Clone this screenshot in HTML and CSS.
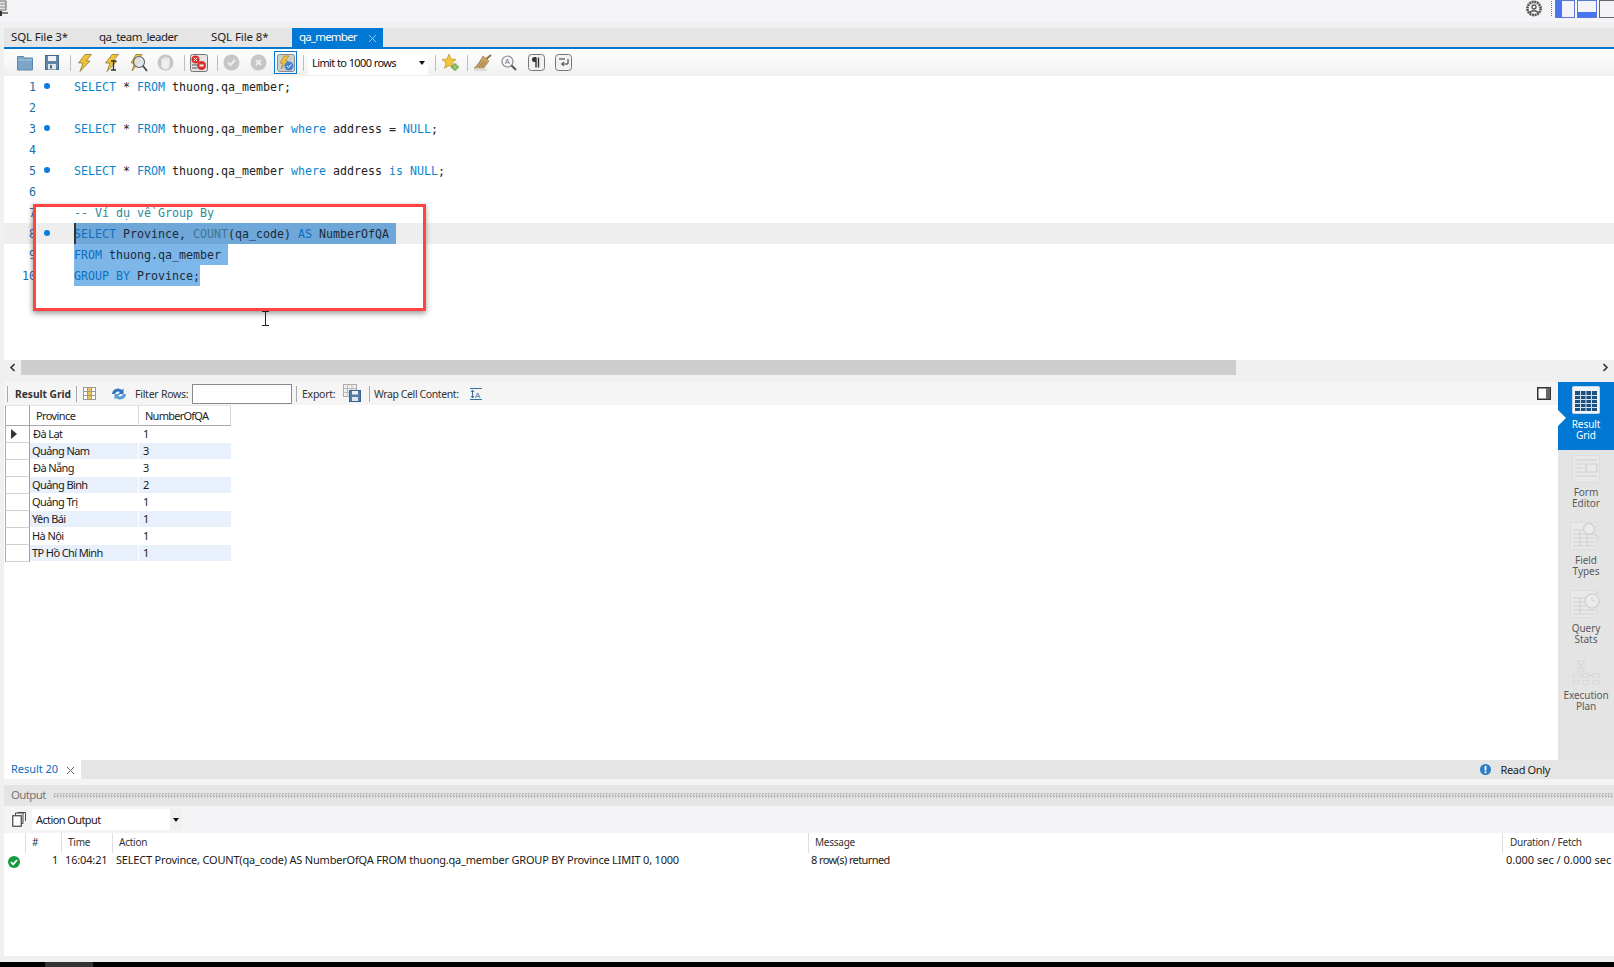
FILE: index.html
```html
<!DOCTYPE html>
<html lang="vi">
<head>
<meta charset="utf-8">
<title>MySQL Workbench</title>
<link rel="stylesheet" href="styles.css">
</head>
<body>
<div class="app">
  <header class="topbar">
    <svg class="logo" width="12" height="18" viewBox="0 0 12 18"><path d="M0 1h8v9H0z" fill="#e8e8e8" stroke="#666"/><path d="M0 4h8M0 7h8" stroke="#888"/><path d="M0 13h10" stroke="#333" stroke-width="1.2"/><path d="M3 11v5" stroke="#333" stroke-width="2"/></svg>
    <div class="topright">
      <svg width="18" height="18" viewBox="0 0 18 18"><circle cx="9" cy="8.5" r="6.6" fill="none" stroke="#555" stroke-width="2.6" stroke-dasharray="2 .6"/><circle cx="9" cy="7" r="2" fill="none" stroke="#555" stroke-width="1.3"/><path d="M5 13c1-3 7-3 8 0" fill="none" stroke="#555" stroke-width="1.3"/></svg>
      <span class="dotline"></span>
      <svg width="20" height="18" viewBox="0 0 20 18"><rect x=".5" y=".5" width="19" height="17" fill="#f4f4f8" stroke="#5b78dc"/><rect x="1" y="1" width="6" height="16" fill="#4a74ee"/></svg>
      <svg width="20" height="18" viewBox="0 0 20 18"><rect x=".5" y=".5" width="19" height="17" fill="#f4f4f8" stroke="#5b78dc"/><rect x="1" y="12" width="18" height="5" fill="#4a74ee"/></svg>
      <svg width="15" height="18" viewBox="0 0 15 18"><rect x=".5" y=".5" width="19" height="17" fill="#f4f4f8" stroke="#666"/></svg>
    </div>
  </header>
  <div class="workspace">
    <div class="band-a"></div>
    <nav class="tabs">
      <span class="tab t1">SQL File 3*</span>
      <span class="tab t2">qa_team_leader</span>
      <span class="tab t3">SQL File 8*</span>
      <span class="tab active">qa_member<svg class="tabx" width="9" height="9" viewBox="0 0 9 9"><path d="M1 1l7 7M8 1L1 8" stroke="#9cc8ee" stroke-width="1"/></svg></span>
    </nav>
    <div class="toolbar">
      <svg class="ic i-folder" width="16" height="16" viewBox="0 0 16 16"><path d="M.5 3V1.5h6l1 1.5h8v12H.5z" fill="#7ba6c8" stroke="#5d87a8"/><path d="M1 5h14" stroke="#a9c8de"/></svg>
      <svg class="ic i-save" width="14" height="15" viewBox="0 0 14 15"><rect x=".5" y=".5" width="13" height="14" fill="#5f86a8" stroke="#48688a"/><rect x="3" y="1" width="8" height="5" fill="#eef2f6"/><rect x="3" y="9" width="8" height="5.5" fill="#dfe6ec"/><rect x="5" y="10" width="2" height="3.5" fill="#48688a"/></svg>
      <i class="sep s1"></i>
      <svg class="ic i-b1" width="15" height="18" viewBox="0 0 15 18"><path d="M8 .5h6.5L9 7h4L3 17.5 6 9H1.5z" fill="#f3c431" stroke="#8c7a3c" stroke-width=".8"/></svg>
      <svg class="ic i-b2" width="15" height="18" viewBox="0 0 15 18"><path d="M8 .5h6.5L9 7h4L3 17.5 6 9H1.5z" fill="#f3c431" stroke="#8c7a3c" stroke-width=".8"/><path d="M7 7h5M7 16h5M9.5 7v9" stroke="#333" stroke-width="1.3"/></svg>
      <svg class="ic i-b3" width="19" height="18" viewBox="0 0 19 18"><path d="M7 .5h6L9 6h3L3 17 5.5 9H2z" fill="#f3c431" stroke="#8c7a3c" stroke-width=".8"/><circle cx="10" cy="8" r="5.5" fill="#dde6ee" fill-opacity=".85" stroke="#667" stroke-width="1.2"/><path d="M14 12l4 5" stroke="#444" stroke-width="1.8"/></svg>
      <svg class="ic i-hand" width="17" height="17" viewBox="0 0 17 17"><circle cx="8.5" cy="8.5" r="8" fill="#c6c6c6"/><path d="M5 7v4c0 2 1.5 3.500 3.500 3.500S12 13 12 11V6H5zM5.500 4.500v4M7.500 3v5M9.500 3v5M11.500 4v4" fill="#eee" stroke="#eee" stroke-width="1.300"/></svg>
      <i class="sep s2"></i>
      <svg class="ic i-stop" width="18" height="18" viewBox="0 0 18 18"><rect x=".5" y=".5" width="17" height="17" rx="2" fill="#e4e4e4" stroke="#777"/><circle cx="5.5" cy="5.5" r="4" fill="#d9302c"/><path d="M3.800 3.800l3.400 3.400m0-3.400L3.800 7.200" stroke="#fff"/><circle cx="11.500" cy="11.500" r="4.500" fill="#d9302c"/><rect x="9.500" y="10.500" width="4" height="2" fill="#fff"/><path d="M2 11h5M2 14h5" stroke="#555"/></svg>
      <i class="sep s3"></i>
      <svg class="ic i-ok" width="17" height="17" viewBox="0 0 17 17"><circle cx="8.5" cy="8.5" r="8" fill="#c6c6c6"/><path d="M5 8.500l2.500 2.500L12 6" stroke="#eee" stroke-width="2" fill="none"/></svg>
      <svg class="ic i-no" width="17" height="17" viewBox="0 0 17 17"><circle cx="8.5" cy="8.5" r="8" fill="#c6c6c6"/><path d="M6 6l5 5M11 6l-5 5" stroke="#eee" stroke-width="2"/></svg>
      <span class="toggle"><svg width="18" height="18" viewBox="0 0 18 18"><rect x=".5" y=".5" width="17" height="17" rx="2" fill="#cfcfcf" stroke="#888"/><path d="M7 2h5L8 7h3l-7 8 2-6H3z" fill="#f3c431" stroke="#8c7a3c" stroke-width=".6"/><circle cx="12" cy="12" r="4.500" fill="#4a84d6"/><path d="M10 12l1.500 1.500L14.200 10.500" stroke="#fff" fill="none"/></svg></span>
      <i class="sep s4"></i>
      <div class="limit"><span>Limit to 1000 rows</span><b class="caret"></b></div>
      <i class="sep s5"></i>
      <svg class="ic i-star" width="17" height="17" viewBox="0 0 17 17"><path d="M7 0l2 5 5 .5-4 3.500 1.300 5.300L7 11.500l-4.500 2.800L4 9 0 5.500 5 5z" fill="#f2c63a" stroke="#b8922a" stroke-width=".7"/><path d="M13 9.500v7M9.500 13h7" stroke="#5c9a3a" stroke-width="3"/><path d="M13 10.500v5M10.500 13h5" stroke="#bde08c" stroke-width="1"/></svg>
      <i class="sep s6"></i>
      <svg class="ic i-broom" width="19" height="17" viewBox="0 0 19 17"><path d="M18 1l-6 5" stroke="#8a6a3a" stroke-width="1.800"/><path d="M10 2l6 5-5 7H1C5 12 7 7 10 2z" fill="#c9a468" stroke="#987a48" stroke-width=".6"/><path d="M6 13l5-6M3 13l5-7M9 13l4-5" stroke="#8a6a3a" stroke-width=".7"/><path d="M1 16h13" stroke="#d4d4d4" stroke-width="1.500"/></svg>
      <svg class="ic i-find" width="16" height="16" viewBox="0 0 16 16"><circle cx="6.500" cy="6.500" r="5.500" fill="#f4f6f8" stroke="#889" stroke-width="1.200"/><path d="M10.500 10.500L15 15" stroke="#555" stroke-width="2"/><text x="4" y="9" class="tiny">A</text></svg>
      <svg class="ic i-para" width="17" height="17" viewBox="0 0 17 17"><rect x=".5" y=".5" width="16" height="16" rx="3" fill="#f2f2f2" stroke="#777"/><path d="M8 3.500v10M10.500 3.500v10" stroke="#333" stroke-width="1.400"/><path d="M8 3H6.500a2.500 2.500 0 0 0 0 5H8z" fill="#333"/></svg>
      <svg class="ic i-wrap" width="17" height="17" viewBox="0 0 17 17"><rect x=".5" y=".5" width="16" height="16" rx="3" fill="#f2f2f2" stroke="#777"/><path d="M4 5h6M13 5v5H7M9 8L6.500 10 9 12" stroke="#333" fill="none"/></svg>
    </div>

    <section class="editor">
      <div class="line"><span class="ln">1</span><span class="dot"></span><code><b class="kw">SELECT</b> * <b class="kw">FROM</b> thuong.qa_member;</code></div>
      <div class="line"><span class="ln">2</span><span class="nodot"></span><code></code></div>
      <div class="line"><span class="ln">3</span><span class="dot"></span><code><b class="kw">SELECT</b> * <b class="kw">FROM</b> thuong.qa_member <b class="kw">where</b> address = <b class="kw">NULL</b>;</code></div>
      <div class="line"><span class="ln">4</span><span class="nodot"></span><code></code></div>
      <div class="line"><span class="ln">5</span><span class="dot"></span><code><b class="kw">SELECT</b> * <b class="kw">FROM</b> thuong.qa_member <b class="kw">where</b> address <b class="kw">is</b> <b class="kw">NULL</b>;</code></div>
      <div class="line"><span class="ln">6</span><span class="nodot"></span><code></code></div>
      <div class="line"><span class="ln">7</span><span class="nodot"></span><code class="comment">-- Ví dụ về Group By</code></div>
      <div class="line current"><span class="ln">8</span><span class="dot"></span><code class="sel sel-cur"><i class="cursor"></i><b class="kw">SELECT</b> Province, <b class="fn">COUNT</b>(qa_code) <b class="kw">AS</b> NumberOfQA</code></div>
      <div class="line"><span class="ln">9</span><span class="nodot"></span><code class="sel sel-nl"><b class="kw">FROM</b> thuong.qa_member</code></div>
      <div class="line"><span class="ln">10</span><span class="nodot"></span><code class="sel"><b class="kw">GROUP BY</b> Province;</code></div>
      <div class="callout"></div>
      <svg class="ibeam" width="9" height="15" viewBox="0 0 9 15"><path d="M1 .5h7M1 14.500h7M4.500 0v15" stroke="#222"/></svg>
    </section>

    <div class="hscroll">
      <span class="sbtn"><svg width="7" height="9" viewBox="0 0 7 9"><path d="M5.500 1L2 4.500 5.500 8" fill="none" stroke="#333" stroke-width="1.600"/></svg></span>
      <div class="track"><div class="thumb"></div></div>
      <span class="sbtn"><svg width="7" height="9" viewBox="0 0 7 9"><path d="M1.500 1L5 4.500 1.500 8" fill="none" stroke="#333" stroke-width="1.600"/></svg></span>
    </div>
    <div class="band-b"></div>

    <div class="resultarea">
      <div class="resultmain">
        <div class="rtoolbar">
          <i class="vsep rs0"></i>
          <strong class="rg">Result Grid</strong>
          <i class="vsep rs1"></i>
          <svg class="ric r-grid" width="13" height="13" viewBox="0 0 13 13"><rect x=".5" y=".5" width="12" height="12" fill="#fff" stroke="#999"/><rect x="4.500" y="1" width="4" height="11" fill="#f2c14e"/><path d="M4.500 0v13M8.500 0v13M0 4.500h13M0 8.500h13" stroke="#999"/></svg>
          <svg class="ric r-ref" width="16" height="14" viewBox="0 0 16 14"><path d="M1 7a6 6 0 0 1 10-4l1.500-1.500V7H7l2-2a3.500 3.500 0 0 0-5 2z" fill="#2f77bd"/><path d="M15 7a6 6 0 0 1-10 4l-1.500 1.500V7H9l-2 2a3.500 3.500 0 0 0 5-2z" fill="#5a9bd8"/></svg>
          <span class="rlabel r-filter">Filter Rows:</span>
          <span class="rinput"></span>
          <i class="vsep rs2"></i>
          <span class="rlabel r-export">Export:</span>
          <svg class="ric r-exp" width="18" height="18" viewBox="0 0 18 18"><rect x=".5" y=".5" width="13" height="12" fill="#f0f0f0" stroke="#aaa"/><path d="M0 4.500h13M0 8.500h13M4.500 0v13M9 0v13" stroke="#bbb"/><rect x="6.500" y="6.500" width="11" height="11" fill="#4f7fa8" stroke="#3a6286"/><rect x="9" y="7" width="6" height="3.500" fill="#eef2f6"/><rect x="9" y="13" width="6" height="4" fill="#dfe6ec"/></svg>
          <i class="vsep rs3"></i>
          <span class="rlabel r-wrap">Wrap Cell Content:</span>
          <svg class="ric r-wr" width="12" height="12" viewBox="0 0 12 12"><path d="M0 .5h12M0 11.500h12" stroke="#3a6f9e"/><path d="M2.500 2v8M1 4l1.500-2L4 4M1 8l1.500 2L4 8" stroke="#3a6f9e" fill="none"/><text x="5" y="9.500" class="tinyb">A</text></svg>
          <svg class="r-toggle" width="14" height="13" viewBox="0 0 14 13"><rect x=".75" y=".75" width="12.500" height="11.500" fill="#fff" stroke="#333" stroke-width="1.500"/><rect x="9" y="1" width="4" height="11" fill="#666"/></svg>
        </div>
        <table class="grid">
          <thead><tr><th class="rh"></th><th class="c1">Province</th><th class="c2">NumberOfQA</th></tr></thead>
          <tbody>
            <tr><td class="rh"><b class="rowarrow"></b></td><td class="d1 shift">Đà Lạt</td><td class="d2">1</td></tr>
            <tr class="alt"><td class="rh"></td><td class="d1">Quảng Nam</td><td class="d2">3</td></tr>
            <tr><td class="rh"></td><td class="d1 shift">Đà Nẵng</td><td class="d2">3</td></tr>
            <tr class="alt"><td class="rh"></td><td class="d1">Quảng Bình</td><td class="d2">2</td></tr>
            <tr><td class="rh"></td><td class="d1">Quảng Trị</td><td class="d2">1</td></tr>
            <tr class="alt"><td class="rh"></td><td class="d1">Yên Bái</td><td class="d2">1</td></tr>
            <tr><td class="rh"></td><td class="d1">Hà Nội</td><td class="d2">1</td></tr>
            <tr class="alt"><td class="rh"></td><td class="d1">TP Hồ Chí Minh</td><td class="d2">1</td></tr>
          </tbody>
        </table>
      </div>
      <aside class="side">
        <div class="sitem on">
          <svg width="28" height="28" viewBox="0 0 28 28"><rect x=".5" y=".5" width="27" height="27" rx="1" fill="#f2f6fa" stroke="#c8d8e8"/><rect x="3" y="5" width="22" height="20" fill="#1f4f7c"/><path d="M3 9.500h22M3 13.500h22M3 17.500h22M3 21.500h22M8.500 5v20M14 5v20M19.500 5v20" stroke="#cfe0ef"/></svg>
          <span>Result<br>Grid</span>
        </div>
        <div class="sitem form">
          <svg width="28" height="28" viewBox="0 0 28 28"><rect x=".5" y=".5" width="27" height="27" rx="1" fill="#e9e9e9" stroke="#dcdcdc"/><path d="M3 5h22M3 9h8M3 13h8M3 17h8M3 21h22M10 17h15M14 9h11v8H14z" fill="none" stroke="#cfcfcf" stroke-width="1.200"/></svg>
          <span>Form<br>Editor</span>
        </div>
        <div class="sitem types">
          <svg width="32" height="28" viewBox="0 0 32 28"><rect x=".5" y=".5" width="26" height="27" rx="1" fill="#e9e9e9" stroke="#dcdcdc"/><path d="M3 8h22M3 12h22M3 16h22M3 20h22M3 24h22M10 8v16M17 8v16" stroke="#cfcfcf" stroke-width="1.100"/><circle cx="19" cy="7" r="5.500" fill="#ececec" stroke="#d2d2d2" stroke-width="1.500"/><path d="M23 11l7 6" stroke="#d8d8d8" stroke-width="2"/></svg>
          <span>Field<br>Types</span>
        </div>
        <div class="sitem stats">
          <svg width="32" height="28" viewBox="0 0 32 28"><rect x=".5" y=".5" width="26" height="27" rx="1" fill="#e9e9e9" stroke="#dcdcdc"/><path d="M3 8h22M3 12h22M3 16h22M3 20h22M3 24h22M10 8v16" stroke="#cfcfcf" stroke-width="1.100"/><circle cx="22" cy="11" r="7" fill="#ececec" stroke="#d2d2d2" stroke-width="1.500"/><path d="M22 7v4h3" stroke="#d0d0d0" fill="none"/><circle cx="27" cy="2.500" r="1.800" fill="#d8d8d8"/></svg>
          <span>Query<br>Stats</span>
        </div>
        <div class="sitem plan">
          <svg width="28" height="25" viewBox="0 0 28 25"><g fill="#e9e9e9" stroke="#d4d4d4"><rect x="6" y="1" width="6" height="3"/><rect x="6" y="8" width="6" height="3"/><rect x="1" y="14" width="6" height="3"/><rect x="11" y="14" width="6" height="3"/><rect x="21" y="14" width="6" height="3"/><rect x="1" y="21" width="6" height="3"/><rect x="11" y="21" width="6" height="3"/><rect x="21" y="21" width="6" height="3"/></g><path d="M9 4v4M9 11v3M7 15.500h4M17 15.500h4" stroke="#d4d4d4"/></svg>
          <span>Execution<br>Plan</span>
        </div>
      </aside>
    </div>

    <div class="rtabs">
      <span class="rtab">Result 20<svg width="9" height="9" viewBox="0 0 9 9"><path d="M1 1l7 7M8 1L1 8" stroke="#666"/></svg></span>
      <span class="readonly"><svg width="11" height="11" viewBox="0 0 11 11"><circle cx="5.500" cy="5.500" r="5.500" fill="#2d7cc4"/><rect x="4.600" y="2" width="1.800" height="4.500" fill="#fff"/><rect x="4.600" y="7.300" width="1.800" height="1.800" fill="#fff"/></svg>Read Only</span>
    </div>
    <div class="band-c"></div>
    <div class="outhead"><span>Output</span><i class="grip"></i></div>
    <div class="outbar">
      <svg width="14" height="15" viewBox="0 0 14 15"><rect x=".75" y="3.750" width="8.500" height="10.500" fill="#fff" stroke="#444" stroke-width="1.200"/><path d="M3.500 3V1h7.500v10.500h-1.500M6 1V.5h7.500V9" fill="none" stroke="#444"/></svg>
      <div class="outsel"><span>Action Output</span><em><b class="caret"></b></em></div>
    </div>
    <section class="log">
      <div class="loghead">
        <span class="h0"></span><span class="h1">#</span><span class="h2">Time</span><span class="h3">Action</span><span class="h4">Message</span><span class="h5">Duration / Fetch</span>
      </div>
      <div class="logrow">
        <span class="l0"><svg width="12" height="12" viewBox="0 0 12 12"><circle cx="6" cy="6" r="6" fill="#159a3c"/><path d="M3 6.200L5.200 8.400 9 4" stroke="#fff" stroke-width="1.800" fill="none"/></svg></span>
        <span class="l1">1</span><span class="l2">16:04:21</span>
        <span class="l3">SELECT Province, COUNT(qa_code) AS NumberOfQA FROM thuong.qa_member GROUP BY Province LIMIT 0, 1000</span>
        <span class="l4">8 row(s) returned</span>
        <span class="l5">0.000 sec / 0.000 sec</span>
      </div>
    </section>
    <div class="band-d"></div>
  </div>
  <footer class="taskbar"><span></span></footer>
</div>
</body>
</html>
```
FILE: styles.css
```css
* { box-sizing: border-box; }
html, body { margin: 0; padding: 0; background: #fff; }
body { font-family: "Noto Sans", "Open Sans", sans-serif; font-size: 11px; color: #1a1a1a; overflow: hidden; }
i, em { font-style: normal; }
svg { display: block; flex: none; }
.tiny { font: 7px "Liberation Sans", sans-serif; fill: #666; }
.tinyb { font: 8px "Liberation Sans", sans-serif; fill: #3a6f9e; }

.app { width: 1614px; height: 967px; display: flex; flex-direction: column; overflow: hidden; }

/* top */
.topbar { height: 22px; background: #f5f5f7; display: flex; justify-content: space-between; align-items: flex-start; }
.logo { margin-left: -2px; }
.topright { display: flex; align-items: flex-start; }
.topright svg:first-child { margin-right: 8px; }
.dotline { width: 1px; height: 15px; margin-top: 1px; margin-right: 3px; border-left: 1px dotted #5a7ba8; }
.topright svg + .dotline + svg, .topright svg + .dotline + svg + svg { margin-right: 2px; }

.workspace { flex: 1; padding-left: 4px; background: #f0f0f0; display: flex; flex-direction: column; min-height: 0; }
.band-a { height: 6px; background: #f0f0f2; }

/* tabs */
.tabs { height: 21px; background: #e5e5e5; border-bottom: 2px solid #0078d4; display: flex; font-size: 11.5px; }
.tab { line-height: 17px; color: #222; white-space: nowrap; }
.t1 { margin-left: 7px; width: 88px; letter-spacing: -.15px; }
.t2 { width: 112px; letter-spacing: -.5px; }
.t3 { width: 81px; letter-spacing: -.1px; }
.tab.active { width: 91px; padding: 0 6px 2px 7px; background: #0078d4; color: #fff; display: flex; align-items: center; justify-content: space-between; letter-spacing: -.8px; }
.tabx { margin-top: 3px; }

/* toolbar */
.toolbar { height: 27px; background: linear-gradient(#ffffff, #f0f0f0); display: flex; align-items: center; }
.sep { display: block; width: 1px; height: 16px; background: #bdbdbd; flex: none; }
.i-folder { margin-left: 13px; }
.i-save { margin-left: 12px; }
.s1 { margin-left: 11px; }
.i-b1 { margin-left: 6px; }
.i-b2 { margin-left: 12px; }
.i-b3 { margin-left: 10px; }
.i-hand { margin-left: 9px; }
.s2 { margin-left: 10px; }
.i-stop { margin-left: 5px; }
.s3 { margin-left: 9px; }
.i-ok { margin-left: 5px; }
.i-no { margin-left: 10px; }
.toggle { margin-left: 7px; width: 23px; height: 23px; border: 1px solid #0078d4; display: flex; align-items: center; justify-content: center; flex: none; }
.s4 { margin-left: 6px; }
.limit { margin-left: 4px; width: 120px; height: 24px; background: #fff; display: flex; align-items: center; padding-left: 4px; font-size: 11px; letter-spacing: -.6px; color: #111; position: relative; white-space: nowrap; flex: none; }
.limit .caret { position: absolute; right: 3px; top: 10px; }
.caret { display: block; width: 0; height: 0; border-left: 3.5px solid transparent; border-right: 3.5px solid transparent; border-top: 4px solid #111; }
.s5 { margin-left: 7px; }
.i-star { margin-left: 6px; }
.s6 { margin-left: 8px; }
.i-broom { margin-left: 5px; }
.i-find { margin-left: 9px; }
.i-para { margin-left: 11px; }
.i-wrap { margin-left: 10px; }

/* editor */
.editor { height: 284px; background: #fff; position: relative; flex: none; }
.line { height: 21px; display: flex; align-items: center; }
.line.current { background: #eeeeee; }
.ln { width: 32px; text-align: right; font: 11.63px/23px "DejaVu Sans Mono", monospace; height: 21px; color: #1c6fa8; flex: none; }
.dot, .nodot { width: 6px; height: 6px; margin: -1px 0 0 8px; border-radius: 50%; flex: none; }
.dot { background: #0a7be0; }
.line code { margin-left: 24px; font: 11.63px/23px "DejaVu Sans Mono", monospace; color: #222; white-space: pre; height: 21px; display: block; position: relative; }
.kw { font-weight: normal; color: #0a86d0; }
.fn { font-weight: normal; color: #5c8fa6; }
.comment { color: #2b8a9e !important; }
.line code.sel { background: #7db6e8; color: #1b2a3a; }
.line code.sel .kw { color: #0c6fc0; }
.line code.sel-cur { background: #6fa7d8; padding-right: 7px; }
.line code.sel-nl { padding-right: 7px; }
.line code.sel .fn { color: #3b7596; }
.cursor { position: absolute; left: 0; top: 0; width: 2px; height: 21px; background: #333; }
.callout { position: absolute; left: 29px; top: 128px; width: 393px; height: 107px; border: 3px solid #ff4444; box-shadow: 0 3px 6px rgba(0,0,0,.3), -1px 1px 4px rgba(0,0,0,.15); pointer-events: none; }
.ibeam { position: absolute; left: 257px; top: 235px; }

/* scrollbar */
.hscroll { height: 15px; background: #f0f0f0; display: flex; align-items: center; flex: none; }
.sbtn { width: 17px; display: flex; align-items: center; justify-content: center; flex: none; }
.track { flex: 1; height: 15px; }
.thumb { width: 1215px; height: 15px; background: #cdcdcd; }
.band-b { height: 7px; background: #f0f0f0; flex: none; }

/* result */
.resultarea { height: 378px; display: flex; flex: none; }
.resultmain { flex: 1; background: #fff; min-width: 0; }
.rtoolbar { height: 23px; background: #f5f5f5; display: flex; align-items: center; font-size: 10.5px; position: relative; }
.vsep { display: block; width: 1px; height: 16px; background: #aaa; flex: none; }
.rs0 { margin-left: 3px; }
.rg { margin-left: 7px; width: 56px; font-weight: 700; white-space: nowrap; font-size: 10.2px; color: #333; }
.rs1 { margin-left: 5px; }
.r-grid { margin-left: 6px; }
.r-ref { margin-left: 15px; }
.rlabel { color: #333; white-space: nowrap; flex: none; letter-spacing: -.25px; }
.r-filter { margin-left: 8px; width: 57px; }
.rinput { width: 100px; height: 20px; background: #fff; border: 1px solid #8a8a8a; flex: none; }
.rs2 { margin-left: 4px; }
.r-export { margin-left: 5px; width: 41px; }
.r-exp { margin-top: -1px; }
.rs3 { margin-left: 8px; }
.r-wrap { margin-left: 4px; width: 96px; letter-spacing: -.4px; }
.r-toggle { margin-left: auto; margin-right: 7px; }

.grid { border-collapse: separate; border-spacing: 0; table-layout: fixed; width: 226px; margin-left: 1px; font-size: 11px; letter-spacing: -.6px; }
.grid th { height: 21px; padding: 0; font-weight: 400; text-align: left; color: #222; background: #fff; border-top: 1px solid #e4e4e4; border-bottom: 1px solid #a8a8a8; border-right: 1px solid #d8d8d8; }
.grid th.rh { width: 25px; border-left: 1px solid #aaa; border-right: 1px solid #a0a0a0; }
.grid th.c1 { width: 109px; padding-left: 6px; }
.grid th.c2 { width: 92px; padding-left: 6px; letter-spacing: -.75px; }
.grid td { height: 17px; padding: 0; line-height: 16px; white-space: nowrap; border-bottom: 1px solid #fff; }
.grid td.rh { background: #fff; border-left: 1px solid #aaa; border-right: 1px solid #a0a0a0; border-bottom: 1px solid #d0d0d0; }
.d1 { padding-left: 2px !important; border-right: 1px solid #fff; }
.d1.shift { padding-left: 3px !important; }
.d2 { padding-left: 4px !important; }
.alt .d1, .alt .d2 { background: #e8f0fb; }
.rowarrow { display: block; margin-left: 5px; width: 0; height: 0; border-top: 5px solid transparent; border-bottom: 5px solid transparent; border-left: 6px solid #333; }

/* side */
.side { width: 56px; background: #e4e4e4; flex: none; display: flex; flex-direction: column; font-size: 10px; letter-spacing: -.05px; }
.sitem { display: flex; flex-direction: column; align-items: center; color: #5a5a5a; line-height: 11px; text-align: center; }
.sitem span { display: block; }
.sitem.on { height: 68px; background: #0078d4; color: #fff; position: relative; padding-top: 4px; }
.sitem.on span { margin-top: 5px; }
.sitem.on::before { content: ""; position: absolute; left: 0; top: 28px; border-left: 8px solid #fff; border-top: 8px solid transparent; border-bottom: 8px solid transparent; }
.sitem.form { height: 66px; padding-top: 5px; }
.sitem.form span { margin-top: 4px; }
.sitem.types { height: 68px; padding-top: 6px; }
.sitem.types span { margin-top: 5px; }
.sitem.stats { height: 68px; padding-top: 6px; }
.sitem.stats span { margin-top: 5px; }
.sitem.plan { padding-top: 8px; }
.sitem.plan span { margin-top: 5px; }

/* result tabs */
.rtabs { height: 19px; background: #e5e5e5; display: flex; justify-content: space-between; align-items: center; flex: none; }
.rtab { width: 77px; height: 19px; background: #fff; padding: 0 0 2px 7px; display: flex; align-items: center; gap: 8px; color: #0a6cc0; font-size: 11px; letter-spacing: -.05px; white-space: nowrap; }
.rtab svg { margin-top: 3px; }
.readonly { display: flex; align-items: center; gap: 9px; padding: 0 64px 1px 0; font-size: 11px; letter-spacing: -.35px; color: #222; white-space: nowrap; }
.band-c { height: 6px; background: #f3f3f3; flex: none; }
.outhead { height: 21px; background: #e5e5e5; display: flex; align-items: center; color: #777; padding: 0 0 2px 7px; font-size: 11.5px; letter-spacing: -.65px; flex: none; }
.grip { flex: 1; height: 5px; margin: 2px 1px 0 7px; background-image: conic-gradient(#bcbcbc 25%, transparent 0 50%, #bcbcbc 0 75%, transparent 0); background-size: 3px 3px; }
.outbar { height: 27px; background: #f4f4f6; display: flex; align-items: center; padding-left: 8px; flex: none; }
.outsel { margin-left: 6px; width: 150px; height: 21px; background: #fff; display: flex; align-items: center; padding-left: 4px; font-size: 11px; letter-spacing: -.6px; justify-content: space-between; }
.outsel em { width: 12px; height: 21px; background: #f0f0f0; display: flex; align-items: center; justify-content: center; }

/* log */
.log { height: 123px; background: #fff; font-size: 10px; flex: none; }
.loghead { height: 20px; display: flex; align-items: stretch; color: #333; line-height: 18px; letter-spacing: -.25px; }
.loghead span { border-left: 1px solid #dedede; padding-left: 6px; flex: none; }
.loghead .h0 { width: 21px; border-left: 0; }
.loghead .h1 { width: 36px; }
.loghead .h2 { width: 51px; }
.loghead .h3 { width: 696px; }
.loghead .h4 { width: 694px; padding-left: 6px; }
.loghead .h5 { flex: 1; padding-left: 7px; }
.logrow { display: flex; height: 13px; align-items: center; font-size: 11px; white-space: nowrap; }
.l0 { width: 48px; padding-left: 4px; flex: none; }
.l0 svg { margin-top: 4px; }
.l1 { width: 13px; flex: none; }
.l2 { width: 51px; flex: none; letter-spacing: -.15px; }
.l3 { width: 695px; flex: none; letter-spacing: -.2px; }
.l4 { width: 695px; flex: none; letter-spacing: -.6px; }
.l5 { flex: 1; }
.band-d { height: 6px; background: #f0f0f0; flex: none; }
.taskbar { height: 5px; background: #000; flex: none; }
.taskbar span { display: block; margin-left: 45px; width: 48px; height: 5px; background: #333; }
```
